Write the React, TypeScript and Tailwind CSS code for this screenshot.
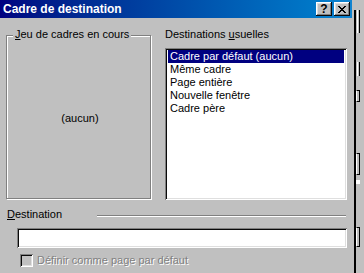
import React from "react";

const sunken =
  "shadow-[inset_1px_1px_0_#808080,inset_-1px_-1px_0_#ffffff,inset_2px_2px_0_#0a0a0a,inset_-2px_-2px_0_#dfdfdf]";
const raised =
  "shadow-[inset_-1px_-1px_0_#0a0a0a,inset_1px_1px_0_#ffffff,inset_-2px_-2px_0_#808080,inset_2px_2px_0_#dfdfdf]";

const items = [
  "Cadre par défaut (aucun)",
  "Même cadre",
  "Page entière",
  "Nouvelle fenêtre",
  "Cadre père",
];

export default function App() {
  return (
    <div
      className="relative w-[364px] h-[273px] overflow-hidden bg-[#c0c0c0] text-[11px] leading-[13px] text-black"
      style={{ fontFamily: '"Liberation Sans", Arial, sans-serif' }}
    >
      <div className="w-[352px] flex flex-col">
        {/* Title bar */}
        <div className="h-[18px] flex items-center bg-gradient-to-r from-[#000080] to-[#1084d0] pl-[3px] pr-[2px]">
          <span className="flex-1 text-white font-bold text-[12px] leading-[18px]">
            Cadre de destination
          </span>
          <div className={`w-[16px] h-[14px] bg-[#c0c0c0] ${raised} flex items-center justify-center text-[12px] leading-[14px] font-bold`}>
            ?
          </div>
          <div className={`ml-[2px] w-[16px] h-[14px] bg-[#c0c0c0] ${raised} flex items-center justify-center`}>
            <svg width="8" height="7" viewBox="0 0 8 7" shapeRendering="crispEdges">
              <path
                d="M0 0h2v1h-2zM6 0h2v1h-2zM1 1h2v1h-2zM5 1h2v1h-2zM2 2h4v1h-4zM3 3h2v1h-2zM2 4h4v1h-4zM1 5h2v1h-2zM5 5h2v1h-2zM0 6h2v1h-2zM6 6h2v1h-2z"
                fill="#000"
              />
            </svg>
          </div>
        </div>

        {/* Top section */}
        <div className="flex pt-[10px] pl-[6px]">
          {/* Group box */}
          <div className="w-[146px] pt-[7px]">
            <div className="relative w-[145px] h-[164px] border border-[#808080] shadow-[1px_1px_0_#ffffff,inset_1px_1px_0_#ffffff] flex items-center justify-center">
              <span className="absolute left-[6px] top-[-8px] px-[2px] bg-[#c0c0c0]">
                <span className="underline">J</span>eu de cadres en cours
              </span>
              <span className="ml-[3px] mt-[3px]">(aucun)</span>
            </div>
          </div>

          {/* Destinations usuelles */}
          <div className="ml-[13px] w-[182px] flex flex-col">
            <div className="h-[13px]">
              Destinations <span className="underline">u</span>suelles
            </div>
            <div className={`mt-[7px] h-[152px] bg-white ${sunken} p-[2px] pt-[2px]`}>
              {items.map((it, i) => (
                <div
                  key={it}
                  className={`h-[13px] leading-[13px] mx-[1px] pl-[2px] whitespace-nowrap ${
                    i === 0 ? "bg-[#000080] text-white" : ""
                  }`}
                >
                  {it}
                </div>
              ))}
            </div>
          </div>
        </div>

        {/* Destination */}
        <div className="flex items-start mt-[8px] pl-[7px]">
          <div className="w-[90px] h-[13px]">
            <span className="underline">D</span>estination
          </div>
          <div className="ml-0 mt-[7px] w-[249px] h-[2px] border-t border-[#808080] border-b border-b-white" />
        </div>

        <div className={`ml-[17px] mt-[7px] w-[330px] h-[20px] bg-white ${sunken}`} />

        <div className="flex items-center ml-[20px] mt-[6px] h-[13px]">
          <div className={`w-[13px] h-[13px] bg-[#c0c0c0] ${sunken}`} />
          <span className="ml-[4px] text-[#808080] [text-shadow:1px_1px_0_#ffffff] whitespace-nowrap">
            Définir comme page par défaut
          </span>
        </div>
      </div>

      {/* Background window fragments at the right edge */}
      <div className="absolute left-[354px] top-[10px] w-[2px] h-[263px] bg-black" />
      <div className="absolute left-[357px] top-[10px] w-[3px] h-[23px] border-l border-white border-r border-r-black" />
      <div className="absolute left-[357px] top-[62px] w-[3px] h-[14px] border-l border-white border-r border-r-black" />
      <div className="absolute left-[356px] top-[90px] w-[4px] h-[12px] border border-black border-l-white" />
      <div className="absolute left-[356px] top-[153px] w-[4px] h-[22px] border border-black border-l-white" />
      <div className="absolute left-[356px] top-[180px] w-[4px] h-[4px] bg-white" />
      <div className="absolute left-[356px] top-[227px] w-[4px] h-[20px] border border-black border-l-white" />
    </div>
  );
}
